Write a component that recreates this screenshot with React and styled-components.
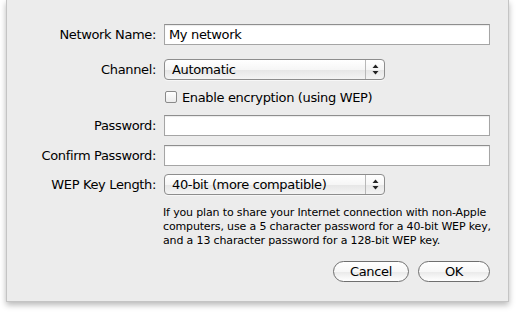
import React from "react";
import styled, { createGlobalStyle } from "styled-components";

const Global = createGlobalStyle`
  html, body { margin: 0; padding: 0; background: #ffffff; }
  body { font-family: "DejaVu Sans", "Liberation Sans", sans-serif; }
`;

const Page = styled.div`
  width: 518px;
  height: 314px;
  padding-left: 6px;
  box-sizing: border-box;
  overflow: hidden;
`;

const Sheet = styled.div`
  width: 503px;
  height: 302px;
  box-sizing: border-box;
  background: #ececec;
  border: 1px solid #c4c4c4;
  border-top: none;
  box-shadow: 0 3px 6px rgba(0, 0, 0, 0.28);
  padding: 24px 18px 0 0;
  display: flex;
  flex-direction: column;
  font-size: 13px;
  letter-spacing: -0.35px;
  color: #000;
`;

const Row = styled.div`
  display: flex;
  align-items: center;
  height: ${(p) => p.$h || 21}px;
  margin-top: ${(p) => p.$mt || 0}px;
`;

const Label = styled.div`
  width: 149px;
  text-align: right;
  padding-right: 8px;
  flex: none;
  white-space: nowrap;
`;

const TextField = styled.div`
  flex: 1;
  height: 21px;
  box-sizing: border-box;
  background: #fff;
  border: 1px solid #a5a5a5;
  border-top-color: #8e8e8e;
  box-shadow: inset 0 1px 1px rgba(0, 0, 0, 0.08);
  padding: 0 4px;
  display: flex;
  align-items: center;
`;

const Popup = styled.div`
  width: 221px;
  height: 21px;
  box-sizing: border-box;
  border: 1px solid #8d8d8d;
  border-radius: 4px;
  background: linear-gradient(#ffffff 0%, #f6f6f6 50%, #e6e6e6 51%, #f4f4f4 100%);
  display: flex;
  align-items: center;
  box-shadow: 0 1px 0 rgba(255, 255, 255, 0.6);
`;

const PopupText = styled.div`
  flex: 1;
  padding-left: 7px;
  white-space: nowrap;
`;

const Stepper = styled.div`
  width: 18px;
  height: 100%;
  border-left: 1px solid #b8b8b8;
  display: flex;
  align-items: center;
  justify-content: center;
`;

const CheckRow = styled.label`
  display: flex;
  align-items: center;
  gap: 5px;
  margin-left: 1px;
`;

const Box = styled.span`
  width: 12px;
  height: 12px;
  box-sizing: border-box;
  border: 1px solid #8a8a8a;
  border-radius: 2px;
  background: linear-gradient(#ffffff, #ececec);
`;

const Help = styled.p`
  margin: 11px 0 0 156px;
  font-size: 11px;
  line-height: 14px;
  letter-spacing: -0.15px;
  white-space: nowrap;
`;

const Buttons = styled.div`
  display: flex;
  justify-content: flex-end;
  gap: 9px;
  margin-top: 13px;
`;

const Button = styled.button`
  width: ${(p) => p.$w}px;
  height: 21px;
  border: 1px solid #6f6f6f;
  border-radius: 11px;
  background: linear-gradient(#ffffff 0%, #f7f7f7 50%, #e9e9e9 51%, #ffffff 100%);
  font-family: inherit;
  font-size: 13px;
  letter-spacing: -0.35px;
  color: #000;
  padding: 0;
`;

const Arrows = () => (
  <svg width="7" height="11" viewBox="0 0 7 11">
    <path d="M3.5 0.5 L6.5 4 L0.5 4 Z" fill="#222" />
    <path d="M3.5 10.5 L6.5 7 L0.5 7 Z" fill="#222" />
  </svg>
);

export default function App() {
  return (
    <>
      <Global />
      <Page>
        <Sheet>
          <Row>
            <Label>Network Name:</Label>
            <TextField>My network</TextField>
          </Row>
          <Row $mt={14}>
            <Label>Channel:</Label>
            <Popup>
              <PopupText>Automatic</PopupText>
              <Stepper><Arrows /></Stepper>
            </Popup>
          </Row>
          <Row $mt={9} $h={16}>
            <Label />
            <CheckRow>
              <Box />
              Enable encryption (using WEP)
            </CheckRow>
          </Row>
          <Row $mt={10}>
            <Label>Password:</Label>
            <TextField />
          </Row>
          <Row $mt={9}>
            <Label>Confirm Password:</Label>
            <TextField />
          </Row>
          <Row $mt={8}>
            <Label>WEP Key Length:</Label>
            <Popup>
              <PopupText>40-bit (more compatible)</PopupText>
              <Stepper><Arrows /></Stepper>
            </Popup>
          </Row>
          <Help>
            If you plan to share your Internet connection with non-Apple
            <br />
            computers, use a 5 character password for a 40-bit WEP key,
            <br />
            and a 13 character password for a 128-bit WEP key.
          </Help>
          <Buttons>
            <Button $w={76}>Cancel</Button>
            <Button $w={72}>OK</Button>
          </Buttons>
        </Sheet>
      </Page>
    </>
  );
}
